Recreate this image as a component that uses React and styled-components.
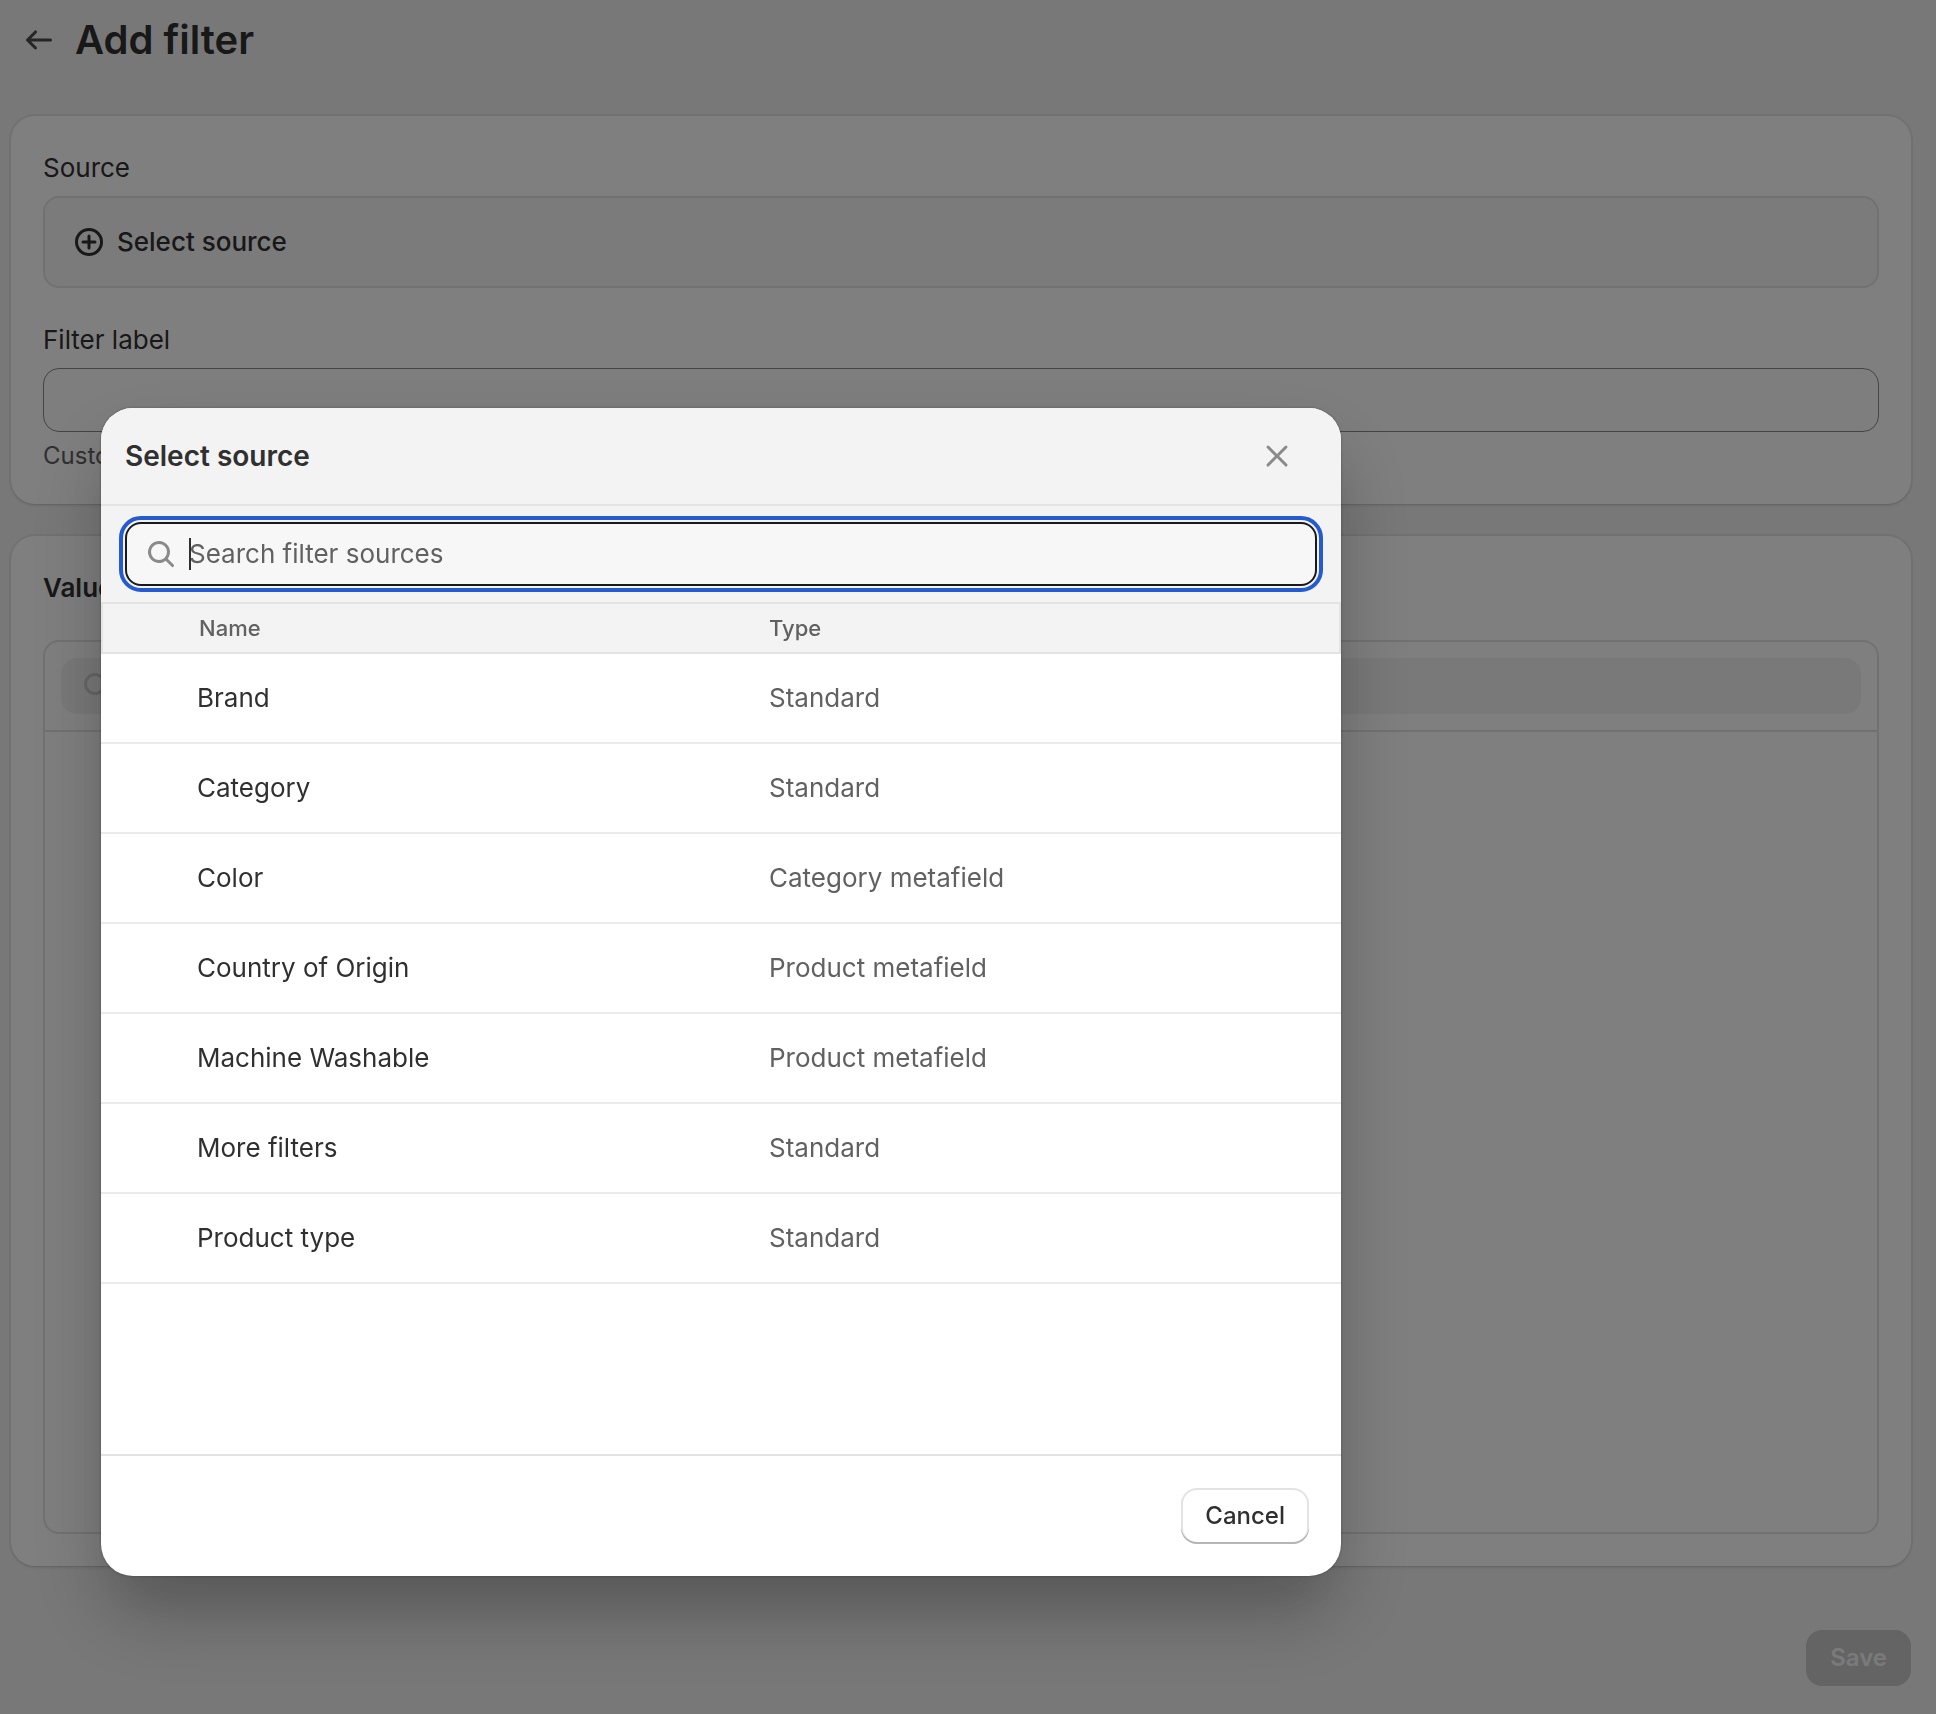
import React from "react";
import styled, { createGlobalStyle, css } from "styled-components";

const colors = {
  text: "#303030",
  subdued: "#616161",
  icon: "#8a8a8a",
  border: "#e3e3e3",
  surface: "#f3f3f3",
};

const GlobalStyle = createGlobalStyle`
  * {
    box-sizing: border-box;
  }

  body {
    margin: 0;
    background: #f1f1f1;
    color: ${colors.text};
    font-family: Inter, "Liberation Sans", sans-serif;
    font-size: 26px;
    line-height: 40px;
  }

  button,
  input {
    font: inherit;
    color: inherit;
  }
`;

const icons = {
  back: "M16.5 10a.75.75 0 0 1-.75.75h-9.69l2.72 2.72a.75.75 0 0 1-1.06 1.06l-4-4a.75.75 0 0 1 0-1.06l4-4a.75.75 0 1 1 1.06 1.06l-2.72 2.72h9.69a.75.75 0 0 1 .75.75Z",
  plus: "M6.25 10a.75.75 0 0 1 .75-.75h2.25v-2.25a.75.75 0 0 1 1.5 0v2.25h2.25a.75.75 0 0 1 0 1.5h-2.25v2.25a.75.75 0 0 1-1.5 0v-2.25h-2.25a.75.75 0 0 1-.75-.75ZM10 17a7 7 0 1 0 0-14 7 7 0 0 0 0 14Zm0-1.5a5.5 5.5 0 1 0 0-11 5.5 5.5 0 0 0 0 11Z",
  search:
    "M12.323 13.383a5.5 5.5 0 1 1 1.06-1.06l2.897 2.897a.75.75 0 1 1-1.06 1.06l-2.897-2.897Zm.677-4.383a4 4 0 1 1-8 0 4 4 0 0 1 8 0Z",
  close:
    "M13.97 15.03a.75.75 0 1 0 1.06-1.06l-3.97-3.97 3.97-3.97a.75.75 0 0 0-1.06-1.06l-3.97 3.97-3.97-3.97a.75.75 0 0 0-1.06 1.06l3.97 3.97-3.97 3.97a.75.75 0 1 0 1.06 1.06l3.97-3.97 3.97 3.97Z",
};

const Svg = styled.svg`
  display: block;
  flex: none;
  width: 40px;
  height: 40px;
  fill: ${(props) => props.$color || colors.text};
`;

const Icon = ({ name, color }) => (
  <Svg viewBox="0 0 20 20" $color={color} aria-hidden="true">
    <path fillRule="evenodd" d={icons[name]} />
  </Svg>
);

const Page = styled.main`
  padding: 12px 25px 28px 11px;
`;

const PageHeader = styled.header`
  display: flex;
  align-items: center;
  gap: 8px;
  margin-bottom: 48px;
`;

const IconButton = styled.button`
  padding: 8px;
  border: none;
  border-radius: 16px;
  background: none;
  cursor: pointer;
`;

const PageTitle = styled.h1`
  margin: 0;
  font-size: 40px;
  font-weight: 600;
  line-height: 48px;
`;

const Cards = styled.div`
  display: flex;
  flex-direction: column;
  gap: 32px;
`;

const Card = styled.section`
  padding: 32px;
  border-radius: 24px;
  background: #fff;
  box-shadow: 0 1px 0 0 #cccccc, 0 0 0 2px #e3e3e3,
    0 2px 3px 0 rgba(0, 0, 0, 0.1);
`;

const Label = styled.label`
  display: block;
  margin-bottom: 8px;
`;

const SourceButton = styled.button`
  display: flex;
  align-items: center;
  gap: 8px;
  width: 100%;
  height: 92px;
  margin-bottom: 32px;
  padding: 0 24px;
  border: 2px solid ${colors.border};
  border-radius: 16px;
  background: #f7f7f7;
  font-weight: 500;
  cursor: pointer;
`;

const LabelInput = styled.input`
  display: block;
  width: 100%;
  height: 64px;
  padding: 0 24px;
  border: 1px solid ${colors.icon};
  border-radius: 16px;
  background: #fdfdfd;
`;

const HelpText = styled.p`
  margin: 8px 0 0;
  color: ${colors.subdued};
  font-size: 24px;
  line-height: 32px;
`;

const CardTitle = styled.h2`
  margin: 0 0 32px;
  font-size: 26px;
  font-weight: 600;
  line-height: 40px;
`;

const ValuesBox = styled.div`
  min-height: 894px;
  border: 2px solid ${colors.border};
  border-radius: 16px;
`;

const ValuesSearch = styled.div`
  padding: 16px;
  border-bottom: 2px solid ${colors.border};
`;

const SearchField = styled.div`
  position: relative;
  display: flex;
  align-items: center;
  gap: 8px;
  height: 56px;
  padding: 0 16px;
  border-radius: 16px;
  background: #f2f2f2;

  ${(props) =>
    props.$focused &&
    css`
      height: 64px;
      padding: 0 14px;
      border: 2px solid #1a1a1a;
      background: #f7f7f7;
      outline: 4px solid #245bd0;
      outline-offset: 2px;
    `};
`;

const SearchInput = styled.input`
  flex: 1;
  min-width: 0;
  padding: 0;
  border: none;
  outline: none;
  background: none;
  caret-color: transparent;

  &::placeholder {
    color: ${colors.subdued};
    opacity: 1;
  }
`;

const Caret = styled.span`
  position: absolute;
  left: 62px;
  width: 2px;
  height: 32px;
  background: ${colors.text};
`;

const PageActions = styled.div`
  display: flex;
  justify-content: flex-end;
  margin-top: 64px;
`;

const Button = styled.button`
  height: 56px;
  padding: 0 24px;
  border: none;
  border-radius: 16px;
  background: #fff;
  box-shadow: inset 0 -2px 0 #b5b5b5, inset 0 0 0 2px ${colors.border};
  font-size: 24px;
  font-weight: 500;
  line-height: 40px;
  cursor: pointer;

  &:disabled {
    background: #c8c8c8;
    box-shadow: none;
    color: #f5f5f5;
    font-weight: 600;
  }
`;

const Overlay = styled.div`
  position: fixed;
  inset: 0;
  display: flex;
  align-items: flex-start;
  padding: 408px 101px 0;
  background: rgba(0, 0, 0, 0.5);
`;

const Modal = styled.div`
  width: 1240px;
  max-width: 100%;
  overflow: hidden;
  border-radius: 32px;
  background: #fff;
  box-shadow: 0 40px 80px rgba(0, 0, 0, 0.2),
    0 40px 60px -16px rgba(0, 0, 0, 0.12), 0 0 3px rgba(0, 0, 0, 0.3);
`;

const ModalHeader = styled.header`
  display: flex;
  align-items: center;
  justify-content: space-between;
  height: 98px;
  padding: 0 36px 0 24px;
  border-bottom: 2px solid ${colors.border};
  background: ${colors.surface};
`;

const ModalTitle = styled.h2`
  margin: 0;
  font-size: 28px;
  font-weight: 600;
  line-height: 40px;
`;

const ModalSearch = styled.div`
  padding: 16px 24px;
  background: ${colors.surface};
`;

const ModalBody = styled.div`
  min-height: 852px;
`;

const SourceTable = styled.table`
  width: 100%;
  table-layout: fixed;
  border-collapse: separate;
  border-spacing: 0;
  text-align: left;

  thead {
    background: ${colors.surface};
    box-shadow: inset 0 0 0 2px ${colors.border};
  }

  th,
  td {
    padding: 0;
  }

  th:first-child {
    width: 668px;
    padding-left: 98px;
  }

  td:first-child {
    padding-left: 96px;
  }
`;

const HeadCell = styled.th`
  height: 52px;
  color: ${colors.subdued};
  font-size: 22px;
  font-weight: 500;
  line-height: 32px;
`;

const Cell = styled.td`
  height: 90px;
  border-bottom: 2px solid #ebebeb;
  color: ${(props) => (props.$subdued ? colors.subdued : colors.text)};
`;

const ModalFooter = styled.footer`
  display: flex;
  justify-content: flex-end;
  padding: 32px;
  border-top: 2px solid ${colors.border};
`;

const sources = [
  { name: "Brand", type: "Standard" },
  { name: "Category", type: "Standard" },
  { name: "Color", type: "Category metafield" },
  { name: "Country of Origin", type: "Product metafield" },
  { name: "Machine Washable", type: "Product metafield" },
  { name: "More filters", type: "Standard" },
  { name: "Product type", type: "Standard" },
];

const SourceModal = () => (
  <Overlay>
    <Modal role="dialog" aria-modal="true" aria-labelledby="modal-title">
      <ModalHeader>
        <ModalTitle id="modal-title">Select source</ModalTitle>
        <IconButton type="button" aria-label="Close">
          <Icon name="close" color={colors.icon} />
        </IconButton>
      </ModalHeader>
      <ModalSearch>
        <SearchField $focused>
          <Icon name="search" color={colors.icon} />
          <Caret />
          <SearchInput
            type="text"
            aria-label="Search filter sources"
            placeholder="Search filter sources"
          />
        </SearchField>
      </ModalSearch>
      <ModalBody>
        <SourceTable>
          <thead>
            <tr>
              <HeadCell scope="col">Name</HeadCell>
              <HeadCell scope="col">Type</HeadCell>
            </tr>
          </thead>
          <tbody>
            {sources.map(({ name, type }) => (
              <tr key={name}>
                <Cell>{name}</Cell>
                <Cell $subdued>{type}</Cell>
              </tr>
            ))}
          </tbody>
        </SourceTable>
      </ModalBody>
      <ModalFooter>
        <Button type="button">Cancel</Button>
      </ModalFooter>
    </Modal>
  </Overlay>
);

const App = () => {
  return (
    <>
      <GlobalStyle />
      <Page>
        <PageHeader>
          <IconButton type="button" aria-label="Back">
            <Icon name="back" color="#4a4a4a" />
          </IconButton>
          <PageTitle>Add filter</PageTitle>
        </PageHeader>
        <Cards>
          <Card>
            <Label htmlFor="source">Source</Label>
            <SourceButton type="button" id="source">
              <Icon name="plus" />
              Select source
            </SourceButton>
            <Label htmlFor="filter-label">Filter label</Label>
            <LabelInput type="text" id="filter-label" />
            <HelpText>Custom</HelpText>
          </Card>
          <Card>
            <CardTitle>Values</CardTitle>
            <ValuesBox>
              <ValuesSearch>
                <SearchField>
                  <Icon name="search" color="#cccccc" />
                  <SearchInput type="text" aria-label="Search values" disabled />
                </SearchField>
              </ValuesSearch>
            </ValuesBox>
          </Card>
        </Cards>
        <PageActions>
          <Button type="button" disabled>
            Save
          </Button>
        </PageActions>
      </Page>
      <SourceModal />
    </>
  );
};

export default App;
